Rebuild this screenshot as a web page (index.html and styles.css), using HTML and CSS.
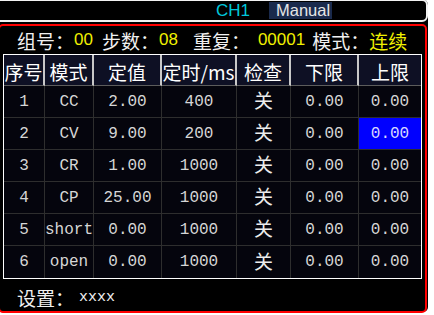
FILE: index.html
```html
<!doctype html>
<html>
<head>
    <meta charset="utf-8">
    <title>步进参数</title>
    <link rel="stylesheet" href="styles.css">
</head>
<body>
<div class="screen">
    <div class="topbar">
        <span class="ch">CH1</span>
        <span class="mode">Manual</span>
    </div>
    <div class="panel">
        <div class="info">
            <span>组号：</span><span class="val">00</span>
            <span class="gap1">步数：</span><span class="val">08</span>
            <span class="gap2">重复：</span><span class="val gap3">00001</span>
            <span class="gap4">模式：</span><span class="val zhval">连续</span>
        </div>
        <table class="steps">
            <thead>
            <tr>
                <th class="c1">序号</th>
                <th class="c2">模式</th>
                <th class="c3">定值</th>
                <th class="c4">定时/ms</th>
                <th class="c5">检查</th>
                <th class="c6">下限</th>
                <th class="c7">上限</th>
            </tr>
            </thead>
            <tbody>
            <tr><td>1</td><td>CC</td><td>2.00</td><td>400</td><td class="zh">关</td><td>0.00</td><td>0.00</td></tr>
            <tr><td>2</td><td>CV</td><td>9.00</td><td>200</td><td class="zh">关</td><td>0.00</td><td class="sel">0.00</td></tr>
            <tr><td>3</td><td>CR</td><td>1.00</td><td>1000</td><td class="zh">关</td><td>0.00</td><td>0.00</td></tr>
            <tr><td>4</td><td>CP</td><td>25.00</td><td>1000</td><td class="zh">关</td><td>0.00</td><td>0.00</td></tr>
            <tr><td>5</td><td>short</td><td>0.00</td><td>1000</td><td class="zh">关</td><td>0.00</td><td>0.00</td></tr>
            <tr><td>6</td><td>open</td><td>0.00</td><td>1000</td><td class="zh">关</td><td>0.00</td><td>0.00</td></tr>
            </tbody>
        </table>
        <div class="setting">
            <span>设置：</span><span class="code">xxxx</span>
        </div>
    </div>
</div>
</body>
</html>
```

FILE: styles.css
```css
html, body {
    margin: 0;
}

body {
    background: #ffffff;
    width: 434px;
    height: 315px;
    overflow: hidden;
}

.screen {
    background: #000000;
    width: 428px;
    height: 313px;
    border-radius: 0 6px 5px 0;
}

/* barre du haut */
.topbar {
    box-sizing: border-box;
    height: 23px;
    width: 436px;
    margin: -1px 0 0 -8px;
    border: 2px solid #f2f2f2;
    border-radius: 6px;
    display: flex;
    align-items: center;
    padding-left: 222px;
    font-family: "Liberation Sans", sans-serif;
    font-size: 17px;
}

.ch {
    color: #00c8dc;
}

.mode {
    margin-left: 19px;
    padding: 0 2px 0 7px;
    line-height: 17px;
    background: #1a2a4c;
    color: #e6e6e6;
    font-size: 16.5px;
}

/* cadre rouge */
.panel {
    box-sizing: border-box;
    width: 429px;
    height: 289px;
    margin: 2px 0 0 -2px;
    border: 2px solid #ff0000;
    border-radius: 5px;
}

.info {
    height: 28px;
    display: flex;
    align-items: center;
    padding-left: 17px;
    font-family: "Liberation Sans", "Noto Sans CJK SC", sans-serif;
    font-size: 19px;
    color: #f0f0f0;
}

.info .val {
    color: #f0f000;
    font-size: 17px;
}

.info .zhval {
    font-size: 19px;
}

.gap1 {
    margin-left: 9px;
}

.gap2 {
    margin-left: 15px;
}

.gap3 {
    margin-left: 8px;
}

.gap4 {
    margin-left: 7px;
}

/* tableau */
.steps {
    margin-left: 3px;
    width: 419px;
    table-layout: fixed;
    border-collapse: separate;
    border-spacing: 0;
    border: 1px solid #ffffff;
}

.steps th,
.steps td {
    box-sizing: border-box;
    padding: 0;
    text-align: center;
    white-space: nowrap;
    overflow: hidden;
}

.steps th {
    height: 28px;
    padding-top: 3px;
    background: #0e1024;
    color: #ffffff;
    font-family: "Noto Sans CJK SC", sans-serif;
    font-size: 19px;
    font-weight: normal;
    border-right: 2px solid #c8c8c8;
    border-bottom: 1px solid #5c5c5c;
}

.steps td {
    height: 32px;
    background: #05050d;
    color: #d6d6d6;
    font-family: "Liberation Mono", "Noto Sans CJK SC", monospace;
    font-size: 16px;
    border-right: 1px solid #2e2e2e;
    border-bottom: 1px solid #2e2e2e;
}

.steps th:last-child,
.steps td:last-child {
    border-right: none;
}

.steps tr:last-child td {
    border-bottom: none;
}

.c1 { width: 41px; }
.c2 { width: 49px; }
.c3 { width: 68px; }
.c4 { width: 75px; }
.c5 { width: 54px; }
.c6 { width: 68px; }
.c7 { width: 62px; }

.steps td.zh {
    padding-bottom: 4px;
    font-family: "Noto Sans CJK SC", sans-serif;
    font-size: 19px;
    color: #ececec;
}

.steps td.sel {
    background: #0000ff;
    color: #d8d8ff;
}

.setting {
    height: 35px;
    box-sizing: border-box;
    padding: 2px 0 0 17px;
    display: flex;
    align-items: center;
    font-family: "Noto Sans CJK SC", sans-serif;
    font-size: 19px;
    color: #f0f0f0;
}

.setting .code {
    margin-left: 5px;
    font-family: "Liberation Mono", monospace;
    font-size: 15px;
}
```
